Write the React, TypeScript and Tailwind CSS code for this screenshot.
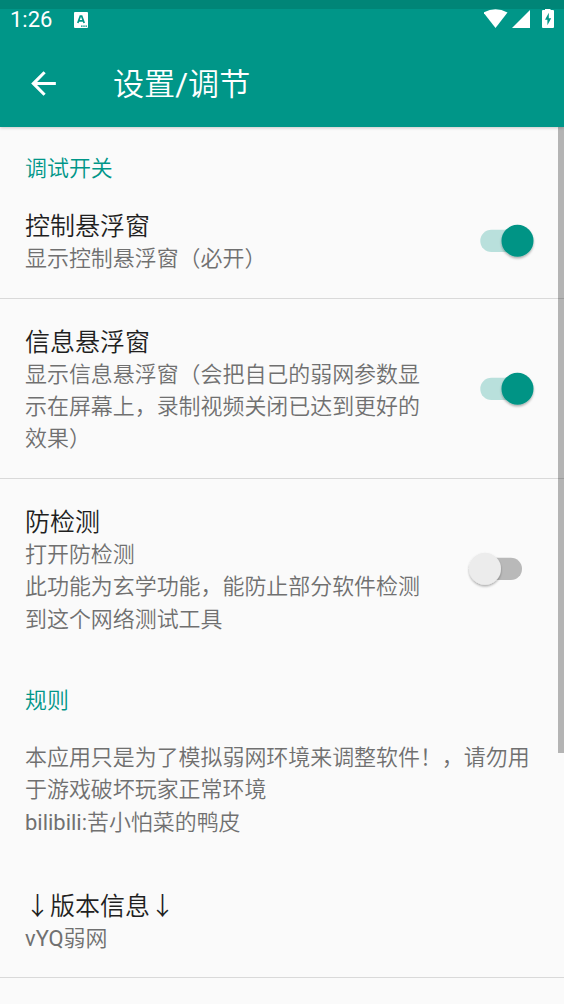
import React from "react";

function Switch({ on = false }: { on?: boolean }) {
  const shadow = on ? "shadow-on" : "shadow-off";
  return (
    <svg width="80" height="48" viewBox="0 0 80 48" className="block shrink-0 overflow-visible">
      <defs>
        <filter id={shadow} x="-30%" y="-30%" width="160%" height="160%">
          <feDropShadow dx="0" dy="1.6" stdDeviation="1.2" floodOpacity="0.32" />
        </filter>
      </defs>
      <rect x="16.3" y="12.8" width="41.7" height="22.2" rx="11.1" fill={on ? "#b9e0dc" : "#b9b9b9"} />
      <circle cx={on ? 53.5 : 21} cy="23.8" r="16" fill={on ? "#009485" : "#ececec"} filter={`url(#${shadow})`} />
    </svg>
  );
}

function SectionTitle({ children }: { children: string }) {
  return <h3 className="h-[56px] pl-[25px] pt-[25.5px] text-[21.95px] leading-[32px] text-[#009688]">{children}</h3>;
}

type ItemProps = { title?: string; lines: React.ReactNode[]; on?: boolean; className: string };

function Item({ title, lines, on, className }: ItemProps) {
  return (
    <section className={`flex items-center justify-between pl-[25px] ${className}`}>
      <div className={title ? "pt-[5px]" : "pt-[2px]"}>
        {title && <h2 className="text-[25px] leading-[32px] text-[#1f1f1f]">{title}</h2>}
        {lines.map((line, i) => (
          <p key={i} className="whitespace-nowrap text-[21.95px] leading-[32.3px] text-[#707070]">{line}</p>
        ))}
      </div>
      {on !== undefined && <Switch on={on} />}
    </section>
  );
}

function StatusBar() {
  return (
    <div className="flex h-[22px] items-center text-white">
      <span className="w-[64px] pl-[10px] text-[22px] font-[450] leading-[22px]">1:26</span>
      <svg className="ml-[10px]" width="14" height="16" viewBox="0 0 14 16">
        <rect width="14" height="16" rx="1" fill="white" />
        <path d="M3.8 11 L6.3 4.2 H7.7 L10.2 11 M4.8 8.8 H9.2" fill="none" stroke="#009688" strokeWidth="1.7" />
        <path d="M7 14.2 H13" stroke="#009688" strokeWidth="1.2" strokeDasharray="1.6 0.6" />
      </svg>
      <svg className="ml-auto" width="80" height="22" viewBox="484 9 80 22" fill="white">
        <path d="M483.5 12.5 Q495.5 6 507.5 12.5 L495.5 28Z" />
        <path d="M530 10 V28 H512Z" />
        <path d="M545 8 H550.5 V10 H553 Q554 10 554 11 V27 Q554 28 553 28 H543 Q542 28 542 27 V11 Q542 10 543 10 H545Z" />
        <path d="M548.8 12.8 L545 19.8 H547.4 V25.2 L551.2 18.2 H548.8Z" fill="#009688" />
      </svg>
    </div>
  );
}

export default function App() {
  return (
    <div className="relative flex h-[1004px] w-[564px] flex-col overflow-hidden bg-[#fafafa] font-[Roboto,'Noto_Sans_CJK_SC',sans-serif] font-[350]">
      <header className="h-[127px] shrink-0 bg-[#009688] text-white shadow-[0_1px_3px_rgba(0,0,0,0.2)]">
        <div className="h-[9px] bg-[#008577]" />
        <StatusBar />
        <div className="flex h-[96px] items-center pl-[25px] pt-[8px]">
          <svg width="37" height="37" viewBox="0 0 24 24" fill="white"><path d="M20 11H7.83l5.59-5.59L12 4l-8 8 8 8 1.41-1.41L7.83 13H20z" /></svg>
          <h1 className="ml-[51px] pt-[5px] text-[31.1px]">设置<span className="font-normal">/</span>调节</h1>
        </div>
      </header>
      <main className="flex shrink-0 flex-col">
        <SectionTitle>调试开关</SectionTitle>
        <Item className="h-[116px] border-b border-[#d9d9d9] pr-[20px]" title="控制悬浮窗" lines={["显示控制悬浮窗（必开）"]} on />
        <Item className="h-[180px] border-b border-[#d9d9d9] pr-[20px]" title="信息悬浮窗" lines={["显示信息悬浮窗（会把自己的弱网参数显", "示在屏幕上，录制视频关闭已达到更好的", "效果）"]} on />
        <Item className="h-[180px] pr-[20px]" title="防检测" lines={["打开防检测", "此功能为玄学功能，能防止部分软件检测", "到这个网络测试工具"]} on={false} />
        <SectionTitle>规则</SectionTitle>
        <Item
          className="h-[149px]"
          lines={[
            "本应用只是为了模拟弱网环境来调整软件！，请勿用",
            "于游戏破坏玩家正常环境",
            <><span className="font-normal">bilibili:</span>苦小怕菜的鸭皮</>,
          ]}
        />
        <Item className="h-[114px] border-b border-[#d9d9d9]" title="↓版本信息↓" lines={[<><span className="font-normal">vYQ</span>弱网</>]} />
      </main>
      <div className="absolute right-0 top-[127px] h-[626px] w-[6px] bg-black/28" />
    </div>
  );
}
